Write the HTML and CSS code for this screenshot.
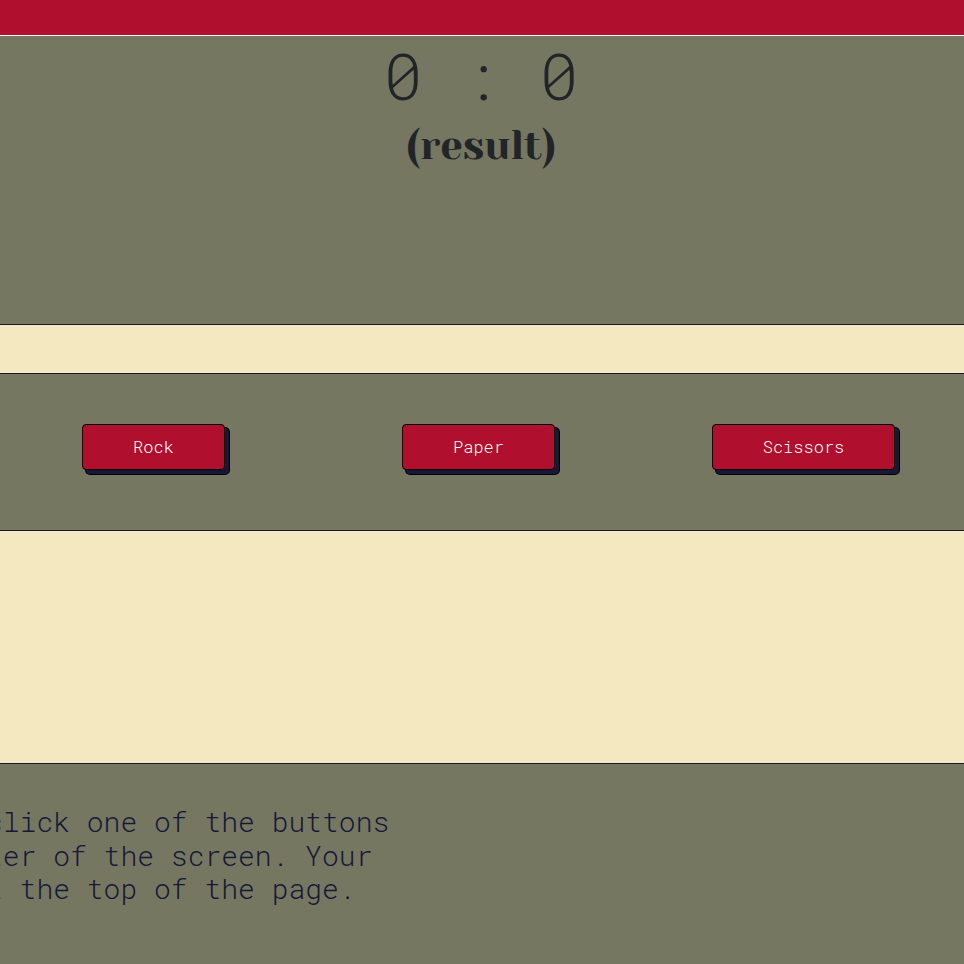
FILE: index.html
```html
<!DOCTYPE html>
<html lang="en">
<head>
<meta charset="utf-8">
<meta name="viewport" content="width=device-width, initial-scale=1">
<title>Rock Paper Scissors</title>
<link rel="stylesheet" href="styles.css">
</head>
<body>
<header class="topbar"></header>
<main>
  <section class="scoreboard">
    <p class="score">0 : 0</p>
    <h1 class="result">(result)</h1>
  </section>
  <section class="choices">
    <div class="choice-row">
      <button class="choice" type="button">Rock</button>
      <button class="choice" type="button">Paper</button>
      <button class="choice" type="button">Scissors</button>
    </div>
  </section>
</main>
<footer class="instructions">
  <p class="help">click one of the buttons<br>ter of the screen. Your<br>t the top of the page.</p>
</footer>
</body>
</html>
```
FILE: styles.css
```css
:root {
  --red: #b10f2e;
  --olive: #757761;
  --cream: #f4e8c1;
  --navy: #171738;
  --ink: #212529;
  --mono: "Roboto Mono", "Liberation Mono", monospace;
}

* {
  box-sizing: border-box;
}

body {
  margin: 0;
  min-height: 100vh;
  display: flex;
  flex-direction: column;
  overflow-x: hidden;
  background: var(--cream);
  color: var(--ink);
  font-family: var(--mono);
  font-weight: 300;
}

.topbar {
  height: 36px;
  background: var(--red);
  border-bottom: 1px solid #fff;
}

.scoreboard {
  min-height: 289px;
  background: var(--olive);
  border-bottom: 1px solid var(--navy);
  text-align: center;
}

.score {
  margin: 0 2px 0 0;
  font-size: 65px;
  line-height: 78px;
}

.result {
  margin: 0 2px 0 0;
  font-family: "Yeseva One", "Liberation Serif", serif;
  font-size: 40px;
  font-weight: 500;
  line-height: 64px;
}

.choices {
  margin-top: 48px;
  padding: 50px 0 60px;
  background: var(--olive);
  border-top: 1px solid var(--navy);
  border-bottom: 1px solid var(--navy);
}

.choice-row {
  display: grid;
  grid-template-columns: repeat(3, 1fr);
  justify-items: center;
  margin: 0 -2px 0 -9px;
}

.choice {
  padding: 10px 50px;
  border: 1px solid #000;
  border-radius: 4px;
  background: var(--red);
  box-shadow: 4px 4px 0 0 var(--navy), 4px 4px 0 1px #000;
  color: #fff;
  font-family: inherit;
  font-size: 17px;
  font-weight: 300;
  line-height: 24px;
  cursor: pointer;
}

.instructions {
  flex: 1;
  margin-top: 232px;
  padding: 41px 0;
  background: var(--olive);
  border-top: 1px solid var(--navy);
  color: var(--navy);
}

.help {
  margin: 0 0 0 -14px;
  font-size: 28px;
  line-height: 1.2;
}
```
